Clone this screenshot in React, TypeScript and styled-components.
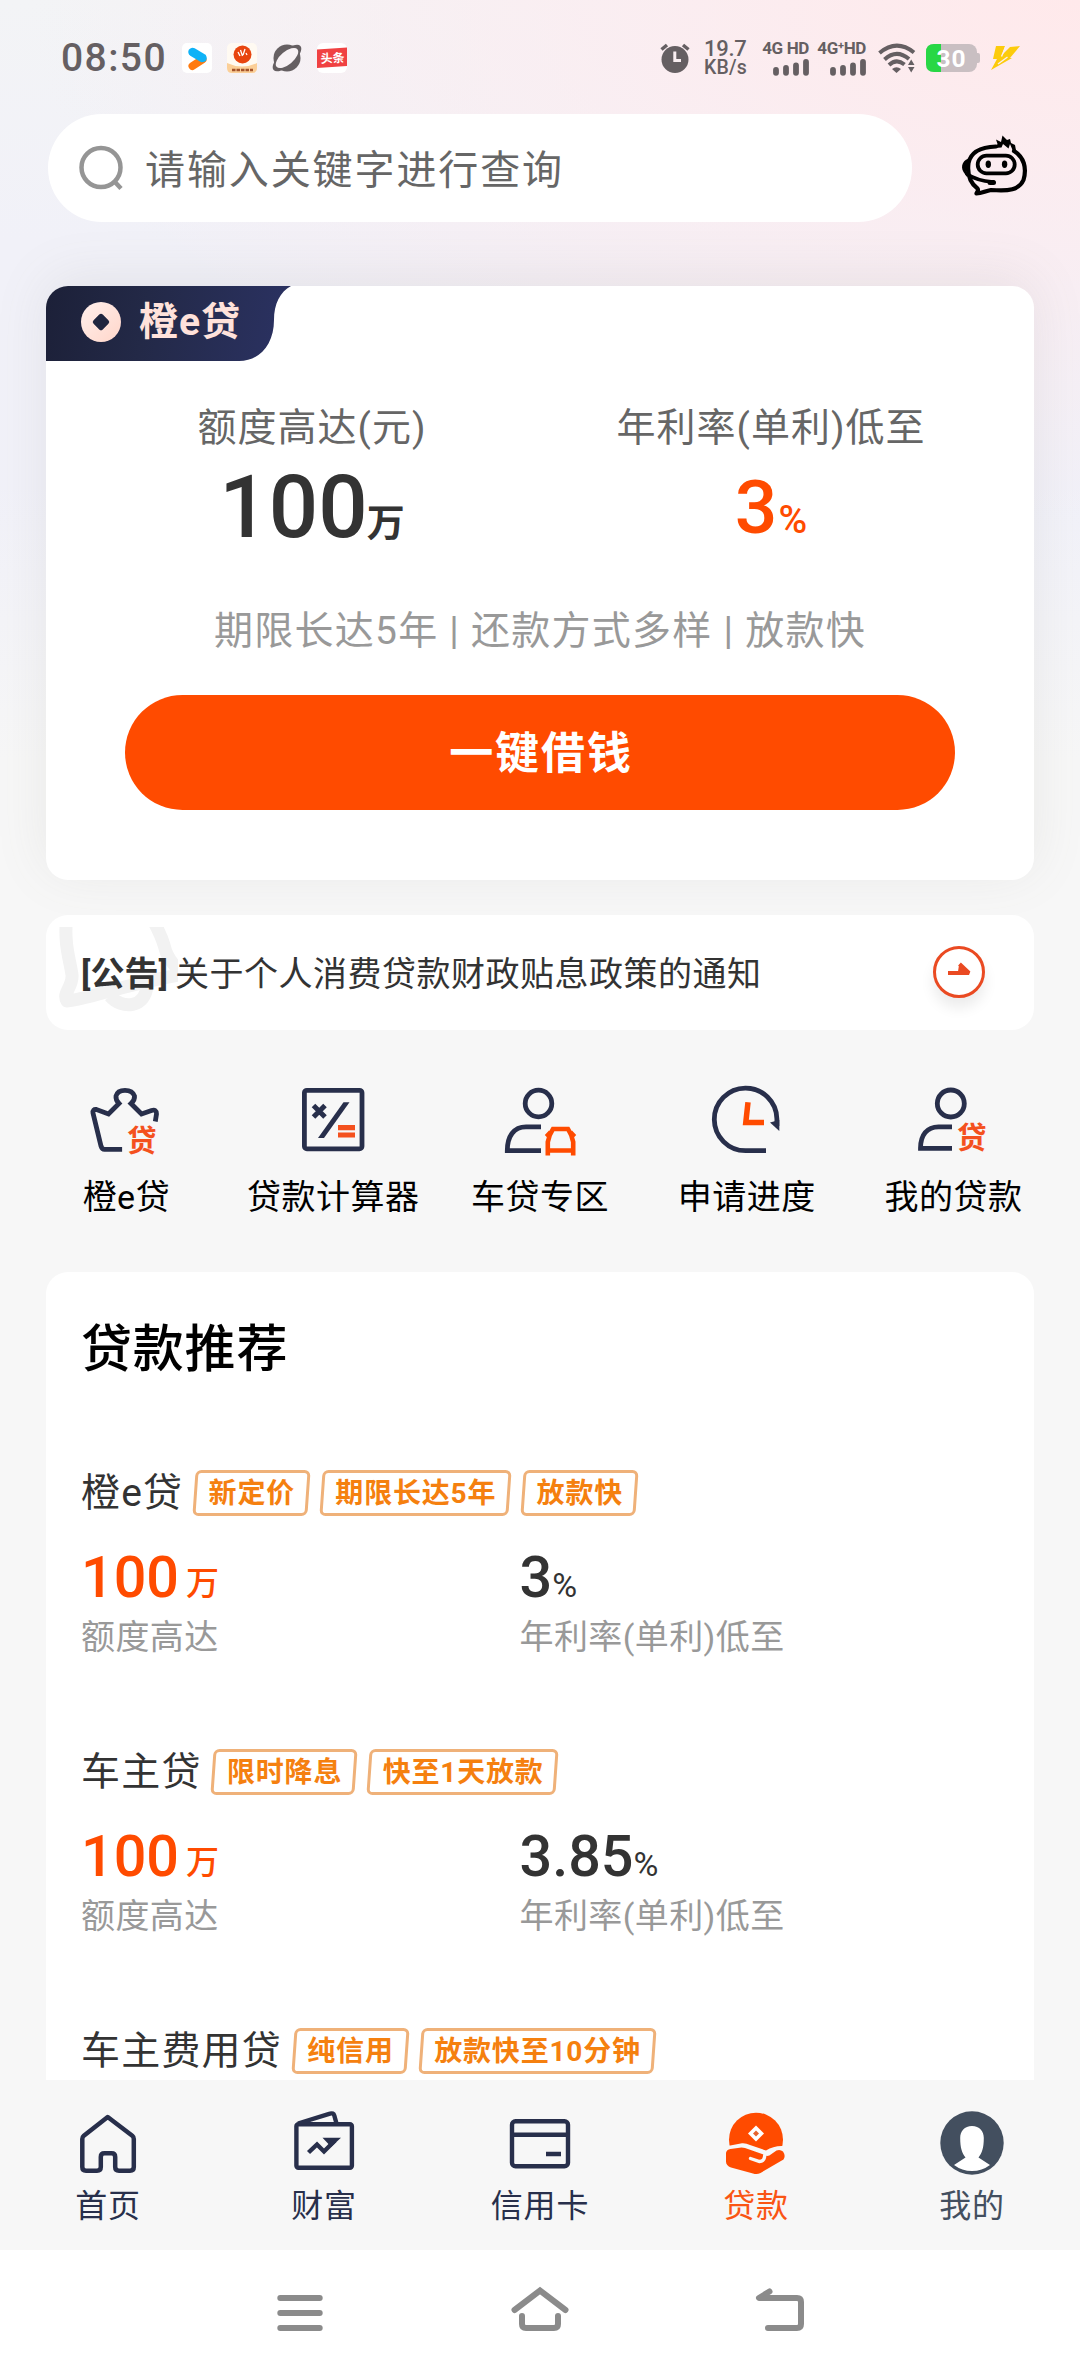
import React from "react";
import styled, { createGlobalStyle } from "styled-components";

const ORANGE = "#ff4b00";
const NAVY = "#282f4b";
const GREY = "#f7f7f7";
const STATUS = "#655f62";
const FONT = `Roboto, "Noto Sans CJK SC", sans-serif`;

const Global = createGlobalStyle`
  * { box-sizing: border-box; }
  body { margin: 0; background: ${GREY}; font-family: ${FONT}; }
`;

const Screen = styled.div`
  width: 1080px;
  height: 2376px;
  display: flex;
  flex-direction: column;
  overflow: hidden;
  white-space: nowrap;
  background:
    linear-gradient(180deg, rgba(247, 247, 247, 0) 480px, ${GREY} 760px),
    radial-gradient(ellipse 1050px 520px at 1080px 0, #ffe9eb 0%, rgba(252, 236, 240, 0.78) 45%, rgba(243, 241, 247, 0) 100%),
    linear-gradient(180deg, #f3f4f6 0, #f1f1f8 240px, #f1f1f9 600px);
`;

const Picture = styled.svg<{ $w: number; $h: number }>`
  display: block;
  flex: none;
  width: ${(p) => p.$w}px;
  height: ${(p) => p.$h}px;
  overflow: visible;
  font-family: ${FONT};
`;

/* ---------- status bar ---------- */

const StatusBar = styled.header`
  height: 114px;
  padding: 2px 60px 0 61px;
  display: flex;
  align-items: center;
  justify-content: space-between;
  color: ${STATUS};
`;

const StatusGroup = styled.div<{ $gap: number }>`
  display: flex;
  align-items: center;
  gap: ${(p) => p.$gap}px;
`;

const Clock = styled.span`
  font-size: 39px;
  font-weight: 500;
  letter-spacing: 1.4px;
  line-height: 44px;
  width: 106px;
`;

const Speed = styled.div`
  width: 45px;
  display: flex;
  flex-direction: column;
  font-weight: 500;
  margin: 0 3px 0 4px;
`;

const SpeedLine = styled.span<{ $size: number; $spacing: number }>`
  font-size: ${(p) => p.$size}px;
  letter-spacing: ${(p) => p.$spacing}px;
  line-height: 19px;
`;

const Signal = styled.div`
  width: 47px;
  display: flex;
  flex-direction: column;
  align-items: flex-end;
  gap: 3px;
`;

const SignalLabel = styled.span`
  font-size: 17px;
  line-height: 15px;
  font-weight: 700;
  letter-spacing: -0.35px;
`;

const Plus = styled.sup`
  font-size: 11px;
  line-height: 0;
  vertical-align: 5px;
`;

const WifiSlot = styled.div`
  margin-left: 2px;
`;

/* ---------- search ---------- */

const SearchRow = styled.div`
  height: 108px;
  padding: 0 52px 0 48px;
  display: flex;
  align-items: center;
  justify-content: space-between;
`;

const SearchField = styled.div`
  width: 864px;
  height: 108px;
  border-radius: 54px;
  background: #fff;
  display: flex;
  align-items: center;
  gap: 21px;
  padding-left: 31px;
`;

const Placeholder = styled.span`
  font-size: 40px;
  letter-spacing: 1.9px;
  line-height: 60px;
  padding-top: 5px;
  color: #666;
`;

const Assistant = styled.div`
  padding-bottom: 4px;
`;

/* ---------- hero card ---------- */

const Hero = styled.section`
  margin: 64px 46px 0;
  height: 594px;
  flex: none;
  border-radius: 22px;
  background: #fff;
  box-shadow: 0 -8px 54px rgba(120, 120, 110, 0.11);
  overflow: hidden;
  display: flex;
  flex-direction: column;
`;

const HeroTag = styled.div`
  width: 246px;
  height: 75px;
  padding: 0 0 3px 35px;
  display: flex;
  align-items: center;
  gap: 18px;
  background: linear-gradient(100deg, #1c2038 0%, #232947 40%, #2b3263 100%);
  clip-path: path("M0 0H245C234 6 228 18 228 34C228 58 214 75 193 75H0Z");
`;

const HeroTagText = styled.span`
  font-size: 39px;
  font-weight: 700;
  letter-spacing: 1px;
  line-height: 50px;
  color: #ffe2db;
`;

const HeroFigures = styled.div`
  display: flex;
  justify-content: center;
  padding: 37px 0 0 3px;
`;

const Figure = styled.div<{ $width: number }>`
  width: ${(p) => p.$width}px;
  display: flex;
  flex-direction: column;
  align-items: center;
`;

const FigureLabel = styled.span`
  font-size: 39px;
  letter-spacing: 1px;
  line-height: 60px;
  color: #666;
`;

const Amount = styled.div<{ $size: number; $color: string }>`
  font-size: ${(p) => p.$size}px;
  font-weight: 500;
  line-height: 98px;
  color: ${(p) => p.$color};
`;

const Unit = styled.span<{ $size: number; $gap: number; $weight?: number; $raise?: number }>`
  font-size: ${(p) => p.$size}px;
  font-weight: ${(p) => p.$weight ?? 500};
  margin-left: ${(p) => p.$gap}px;
  line-height: 1;
  vertical-align: ${(p) => p.$raise ?? 0}px;
`;

const HeroNote = styled.p`
  margin: 45px 0 0;
  text-align: center;
  font-size: 39px;
  letter-spacing: 1.25px;
  line-height: 60px;
  color: #999;
`;

const Borrow = styled.button`
  margin: 34px auto 0;
  width: 830px;
  height: 115px;
  padding: 0 0 6px 2px;
  border: 0;
  border-radius: 58px;
  background: ${ORANGE};
  color: #fff;
  font-family: inherit;
  font-size: 44px;
  font-weight: 700;
  letter-spacing: 1.9px;
`;

/* ---------- notice ---------- */

const Notice = styled.section`
  position: relative;
  margin: 35px 46px 0;
  height: 115px;
  flex: none;
  border-radius: 22px;
  background: #fff;
  display: flex;
  align-items: center;
  padding: 0 49px 0 35px;
  color: #333;
  font-size: 34px;
  line-height: 50px;
`;

const Watermark = styled.div`
  position: absolute;
  left: 12px;
  top: 12px;
`;

const NoticeTag = styled.b`
  position: relative;
  width: 94px;
  padding-top: 3px;
  font-weight: 700;
`;

const NoticeText = styled.span`
  position: relative;
  flex: 1;
  padding-top: 3px;
  letter-spacing: 0.5px;
`;

const Go = styled.div`
  width: 52px;
  height: 52px;
  margin-bottom: 2px;
  border-radius: 50%;
  border: 3px solid #ea4a22;
  background: #fff;
  box-shadow: 0 10px 14px rgba(0, 0, 0, 0.08);
  display: flex;
  align-items: center;
  justify-content: center;
`;

/* ---------- shortcuts ---------- */

const Shortcuts = styled.nav`
  display: grid;
  grid-template-columns: repeat(5, 206.8px);
  justify-content: center;
  height: 242px;
  flex: none;
  padding-top: 50px;
`;

const Shortcut = styled.div`
  display: flex;
  flex-direction: column;
  align-items: center;
  gap: 15.5px;
  font-size: 34px;
  letter-spacing: 0.5px;
  line-height: 50px;
  color: #000;
`;

/* ---------- recommendations ---------- */

const Recommend = styled.section`
  margin: 0 46px;
  height: 808px;
  flex: none;
  padding: 0 35px;
  border-radius: 22px 22px 0 0;
  background: #fff;
  overflow: hidden;
`;

const Title = styled.h2`
  margin: 43px 0 82px;
  font-size: 51px;
  font-weight: 500;
  line-height: 70px;
  letter-spacing: 0.8px;
  color: #000;
`;

const Product = styled.article`
  height: 279px;
`;

const ProductHead = styled.div`
  display: flex;
  align-items: center;
  height: 52px;
`;

const ProductName = styled.span`
  font-size: 39px;
  line-height: 52px;
  letter-spacing: 1.2px;
  color: #333;
  margin-right: 9.5px;
`;

const Tag = styled.span<{ $width: number }>`
  width: ${(p) => p.$width}px;
  height: 46px;
  margin-right: 10px;
  display: flex;
  align-items: center;
  justify-content: center;
  position: relative;
  font-size: 28px;
  font-weight: 700;
  letter-spacing: 0.8px;
  line-height: 40px;
  padding: 1px 0 0 1px;
  color: #f5800f;
  &::before {
    content: "";
    position: absolute;
    inset: 0 1px;
    border: 3px solid #efb179;
    border-radius: 6px;
    transform: skewX(-4deg);
  }
`;

const ProductFigures = styled.div`
  display: grid;
  grid-template-columns: 438.5px 1fr;
  margin-top: 25px;
`;

const ProductValue = styled.div<{ $color: string }>`
  font-size: 57.5px;
  font-weight: 500;
  height: 68px;
  line-height: 67px;
  color: ${(p) => p.$color};
`;

const ProductLabel = styled.div`
  font-size: 34px;
  line-height: 50px;
  letter-spacing: 0.4px;
  color: #999;
`;

/* ---------- bottom bars ---------- */

const TabBar = styled.nav`
  height: 170px;
  flex: none;
  background: ${GREY};
  display: grid;
  grid-template-columns: repeat(5, 1fr);
`;

const Tab = styled.div<{ $color: string }>`
  display: flex;
  flex-direction: column;
  align-items: center;
  padding-top: 30px;
  gap: 5px;
  font-size: 32px;
  line-height: 42px;
  letter-spacing: 0.8px;
  color: ${(p) => p.$color};
`;

const SystemBar = styled.footer`
  height: 126px;
  flex: none;
  background: #fff;
  display: grid;
  grid-template-columns: repeat(3, 240px);
  justify-content: center;
  justify-items: center;
  padding-top: 34px;
`;

/* ---------- drawings ---------- */

const PlayApp = () => (
  <Picture $w={30} $h={30} viewBox="0 0 30 30">
    <rect width="30" height="30" rx="5" fill="#fff" />
    <path d="M10.500 23L20.500 16.500" stroke="#ff7a0f" strokeWidth="8" strokeLinecap="round" />
    <path d="M10.500 9L20.500 15" stroke="#0fb2f7" strokeWidth="8.500" strokeLinecap="round" />
  </Picture>
);

const LanternApp = () => (
  <Picture $w={30} $h={30} viewBox="0 0 30 30">
    <rect width="30" height="30" rx="5" fill="#fffaf2" />
    <path d="M0 20Q15 27 30 20V25Q30 30 25 30H5Q0 30 0 25Z" fill="#fbcf98" />
    <circle cx="15.500" cy="11.500" r="9" fill="#e8450f" />
    <path d="M11 9l2 4M13.500 7l2 6M18 6l-2 6M19 10l1 2" stroke="#fff" strokeWidth="1.300" />
    <path d="M5 27H26" stroke="#a5532a" strokeWidth="2.500" strokeDasharray="3.500 1" />
  </Picture>
);

const PlanetApp = () => (
  <Picture $w={30} $h={30} viewBox="0 0 30 30">
    <circle cx="15" cy="15" r="13.500" fill={STATUS} />
    <ellipse cx="15" cy="15" rx="18" ry="7.500" transform="rotate(-42 15 15)" fill={STATUS} />
    <ellipse cx="15" cy="15" rx="13.600" ry="6.500" transform="rotate(-40 15 15)" fill="#f7f1f4" />
  </Picture>
);

const NewsApp = () => (
  <Picture $w={30} $h={30} viewBox="0 0 30 30">
    <rect width="30" height="30" rx="6" fill="#fff" />
    <path d="M0 6.500L30 4.500V23L0 25Z" fill="#f04142" />
    <text x="3.500" y="19.500" fontSize="12" fontWeight="700" fill="#fff" transform="rotate(-3 15 15)">
      头条
    </text>
  </Picture>
);

const Alarm = () => (
  <Picture $w={30} $h={30} viewBox="0 0 30 30">
    <circle cx="15" cy="16.500" r="13.500" fill={STATUS} />
    <path d="M1.500 6.500L7 2M28.500 6.500L23 2" stroke={STATUS} strokeWidth="3.500" />
    <path d="M14.800 8.500V17.500H21" stroke="#f9eef1" strokeWidth="3" fill="none" />
  </Picture>
);

const Bars = () => (
  <Picture $w={36} $h={17} viewBox="0 0 36 17">
    <path d="M3 11V13.800M13 9V13.800M23 6.500V13.800M33 3V13.800" stroke={STATUS} strokeWidth="5.800" strokeLinecap="round" />
  </Picture>
);

const Wifi = () => (
  <Picture $w={38} $h={30} viewBox="0 0 38 30">
    <g fill="none" stroke={STATUS} strokeWidth="4">
      <path d="M1.500 10Q18.500 -4.500 36 9.500" />
      <path d="M6.500 16.500Q18.500 5.500 31 16" />
      <path d="M11 22Q18.500 15 26.500 21.500" />
    </g>
    <path d="M14 26Q18.500 22.500 23 26L18.500 30Z" fill={STATUS} />
    <path d="M30 22L33.200 16.500L36.500 22ZM30 24L33.200 29.500L36.500 24Z" fill={STATUS} />
  </Picture>
);

const Battery = () => (
  <Picture $w={54} $h={28} viewBox="0 0 54 28">
    <rect width="51" height="28" rx="8" fill="#c9bfc2" />
    <path d="M50 9H52Q54 9 54 11V17Q54 19 52 19H50Z" fill="#c9bfc2" />
    <path d="M8 0H15V28H8Q0 28 0 20V8Q0 0 8 0Z" fill="#28d745" />
    <text x="25.500" y="22.500" fontSize="24.500" fontWeight="700" textAnchor="middle" letterSpacing="1" fill="#fff">
      30
    </text>
  </Picture>
);

const Bolt = () => (
  <Picture $w={30} $h={26} viewBox="0 0 30 26">
    <path d="M6 1H15L12 10L20 2L30 1L20 13H22L1 25L7 14H3Z" fill="#fccb0c" />
    <path d="M16 1L11.500 11.500M17.500 12L8 19" stroke="#fbeef0" strokeWidth="1.400" />
  </Picture>
);

const SearchIcon = () => (
  <Picture $w={45} $h={45} viewBox="0 0 45 45">
    <circle cx="22" cy="21.500" r="19.500" fill="none" stroke="#959595" strokeWidth="4.500" />
    <path d="M35 35L42 42.500" stroke="#959595" strokeWidth="4.500" />
  </Picture>
);

const Robot = () => (
  <Picture $w={66} $h={60} viewBox="962 136 66 60">
    <g fill="none" stroke="#000" strokeLinejoin="round" strokeLinecap="round">
      <path
        strokeWidth="4.200"
        d="M996 146.500C982 147 971 151 968.500 163C967 175 970 183 977.500 188.500C979 190.500 977 192 976.500 193.500C982 193.500 985 191 991 190C1009 191.500 1019 190 1023.500 180C1027 168 1024 157 1014 151"
      />
      <rect x="977.700" y="155.700" width="37" height="17.600" rx="8.800" strokeWidth="3.800" />
      <path d="M967 174C974 179 982 181 993 182" strokeWidth="3.600" />
      <path d="M990 182.500H993.500" strokeWidth="5" />
    </g>
    <ellipse cx="988.300" cy="164.300" rx="2.700" ry="3.700" />
    <ellipse cx="1004.600" cy="164.300" rx="2.700" ry="3.700" />
    <path d="M971 158C963 159 960 166 963.500 172L967 177Q966 166 971 158Z" />
    <path d="M995 148L997.500 144L996 139.500L1001 142L1002.500 135.500L1007 140L1010 139L1011 143L1015 145L1016.500 153L1012.500 150L1010 144L1008.500 148.500L1003 144L1001.500 147.500Z" />
  </Picture>
);

const Coin = () => (
  <Picture $w={40} $h={40} viewBox="0 0 40 40">
    <defs>
      <linearGradient id="coin" x1="0" y1="0" x2="1" y2="1">
        <stop offset="0" stopColor="#fff0ec" />
        <stop offset="1" stopColor="#ffd6ca" />
      </linearGradient>
    </defs>
    <circle cx="20" cy="20" r="20" fill="url(#coin)" />
    <rect x="13.500" y="13.500" width="13" height="13" rx="2.500" transform="rotate(45 20 20)" fill="#20263f" />
  </Picture>
);

const Bell = () => (
  <Picture $w={130} $h={90} viewBox="58 927 130 90">
    <defs>
      <clipPath id="bellTop">
        <rect x="50" y="927" width="128" height="90" />
      </clipPath>
    </defs>
    <g clipPath="url(#bellTop)" fill="none" stroke="#f2f2f2" strokeWidth="13" strokeLinejoin="round">
      <path d="M66.500 920C64 945 70 960 72 975C73 987 62 993 67 1001C90 999 120 985 184 974C172 965 166 955 164 945C161 935 158 930 153 920" />
      <path d="M110 996C122 1010 146 1008 147 985" />
    </g>
  </Picture>
);

const ArrowIcon = () => (
  <Picture $w={24} $h={20} viewBox="0 0 24 20">
    <path d="M1 11H22L12.500 2" fill="none" stroke="#ea4a22" strokeWidth="4" strokeLinejoin="bevel" />
    <path d="M11 9.500H22L12 3Z" fill="#ea4a22" />
  </Picture>
);

const Crown = () => (
  <Picture $w={72} $h={76} viewBox="90.500 1080 72 76">
    <path
      d="M155.800 1121.500L157 1114Q157.200 1109 152 1110.500L142 1114L131.500 1103.500Q135.500 1100 135 1096Q133 1090.300 125.500 1090.300Q118 1090.300 116.500 1096Q116 1100 119.500 1103.500L109 1114L97 1109.500Q93 1109 93.500 1113L101.500 1146Q102.500 1149.300 105 1149.300H122.600"
      fill="none"
      stroke={NAVY}
      strokeWidth="4.800"
    />
    <text x="127.500" y="1150.500" fontSize="29.500" fontWeight="700" fill="#f4511e">
      贷
    </text>
  </Picture>
);

const Calculator = () => (
  <Picture $w={72} $h={76} viewBox="298 1080 72 76">
    <rect x="305.400" y="1090.300" width="57.600" height="58.500" rx="2.500" fill="none" stroke={NAVY} strokeWidth="4.800" />
    <path d="M314.500 1105.500L326 1117M326 1105.500L314.500 1117" stroke={NAVY} strokeWidth="5" />
    <path d="M344.500 1102.300H350.500L325 1138H319Z" fill={NAVY} />
    <path d="M339 1127.700H356M339 1135H356" stroke="#f4511e" strokeWidth="5.200" />
  </Picture>
);

const CarOwner = () => (
  <Picture $w={72} $h={76} viewBox="504 1080 72 76">
    <circle cx="538.500" cy="1103.500" r="13.300" fill="none" stroke={NAVY} strokeWidth="4.800" />
    <path d="M541 1126.800H526C514 1126.800 507.300 1136 507.300 1150.700H541" fill="none" stroke={NAVY} strokeWidth="4.800" />
    <path
      d="M547.800 1155.500V1142Q549 1135 553 1129H568Q572 1135 573.200 1142V1155.500M547.800 1150.500H573.200"
      fill="none"
      stroke={ORANGE}
      strokeWidth="4.600"
    />
    <path d="M544.800 1135L549 1130.500L552.500 1133L549 1139.500ZM576.200 1135L572 1130.500L568.500 1133L572 1139.500Z" fill={ORANGE} />
  </Picture>
);

const Progress = () => (
  <Picture $w={72} $h={76} viewBox="711 1080 72 76">
    <path d="M766 1150.700H745.600A31.300 31.300 0 1 1 776.900 1119V1126" fill="none" stroke={NAVY} strokeWidth="4.800" />
    <path d="M779.300 1131V1120L770 1122.500Z" fill={NAVY} />
    <path d="M748 1102.300L745.800 1122.500H764" fill="none" stroke={ORANGE} strokeWidth="5.500" />
  </Picture>
);

const MyLoan = () => (
  <Picture $w={72} $h={76} viewBox="918 1080 72 76">
    <circle cx="950.800" cy="1103.500" r="13.500" fill="none" stroke={NAVY} strokeWidth="4.800" />
    <path d="M952 1126.800H938.500C927 1126.800 920.500 1135 920.500 1148.300H952" fill="none" stroke={NAVY} strokeWidth="4.800" />
    <text x="957" y="1148.300" fontSize="29.500" fontWeight="700" fill="#f4511e">
      贷
    </text>
  </Picture>
);

const HomeIcon = () => (
  <Picture $w={70} $h={70} viewBox="73 2110 70 70">
    <path
      d="M107.700 2117L132.300 2135.800Q133.800 2137 133.800 2139V2167Q133.800 2170.700 130 2170.700H119Q115.200 2170.700 115.200 2167V2157Q115.200 2153.300 111.500 2153.300H104.500Q100.800 2153.300 100.800 2157V2167Q100.800 2170.700 97 2170.700H86Q82.300 2170.700 82.300 2167V2139Q82.300 2137 83.800 2135.800Z"
      fill="none"
      stroke={NAVY}
      strokeWidth="4.500"
      strokeLinejoin="round"
    />
  </Picture>
);

const WealthIcon = () => (
  <Picture $w={70} $h={70} viewBox="289 2110 70 70">
    <g fill="none" stroke={NAVY} strokeWidth="4.400" strokeLinejoin="round">
      <rect x="296.400" y="2124.300" width="55.500" height="43.500" rx="2" />
      <path d="M298 2123.500L330 2113.700Q333.500 2112.500 334.300 2115.500L336.500 2123.500" />
      <path d="M308.500 2152.500L317 2144.500L324 2151.500L335 2140.500" strokeLinejoin="miter" />
    </g>
    <path d="M322.500 2137.800H341L331 2147L327.500 2143Z" fill={NAVY} />
  </Picture>
);

const CardIcon = () => (
  <Picture $w={70} $h={70} viewBox="505 2110 70 70">
    <rect x="512" y="2121.200" width="56" height="45" rx="3.500" fill="none" stroke={NAVY} strokeWidth="4.400" />
    <path d="M512 2134.700H568M546 2154H561" stroke={NAVY} strokeWidth="4.400" />
  </Picture>
);

const LoanIcon = () => (
  <Picture $w={70} $h={70} viewBox="721 2110 70 70">
    <circle cx="756" cy="2139.700" r="27" fill={ORANGE} />
    <path d="M756 2125.500L764 2133.500L756 2141.500L748 2133.500Z" fill="#fff" />
    <path d="M756 2130.500L759 2133.500L756 2136.500L753 2133.500Z" fill="#e5632f" />
    <path
      d="M724 2147L729 2145.800L742 2143.300Q746 2143 750 2145L766 2150.500Q774 2145.300 784 2146V2174H724Z"
      fill={GREY}
    />
    <path
      d="M726 2153Q726.500 2149.500 730.500 2149L741.500 2147.500L745 2148L763.500 2154.500Q767.500 2157.500 771.500 2154L776.500 2150.500Q780 2149 783 2151.500Q786 2156 783.500 2159.500L760.500 2173Q757 2174.800 753 2173.500L731 2167.500Q726 2165.500 726 2161.500Z"
      fill={ORANGE}
    />
    <path d="M750.500 2158.500L759.500 2161.500Q764.500 2161.500 764.800 2155" fill="none" stroke={GREY} strokeWidth="3.400" strokeLinecap="round" />
  </Picture>
);

const MeIcon = () => (
  <Picture $w={70} $h={70} viewBox="937 2110 70 70">
    <circle cx="972" cy="2143" r="31.700" fill="#434f5f" />
    <path
      d="M972 2126C979.500 2126 983.800 2131 983.800 2138C983.800 2148 982 2153 978.500 2157.500L990 2165Q982 2171 972 2171Q962 2171 954 2165L965.500 2157.500C962 2153 960.200 2148 960.200 2138C960.200 2131 964.500 2126 972 2126Z"
      fill="#fff"
    />
  </Picture>
);

const MenuKey = () => (
  <Picture $w={60} $h={50} viewBox="270 2284 60 50">
    <path d="M280.300 2298H319.700M280.300 2313H319.700M280.300 2328H319.700" stroke="#8b8b8b" strokeWidth="6" strokeLinecap="round" />
  </Picture>
);

const HomeKey = () => (
  <Picture $w={60} $h={50} viewBox="510 2284 60 50">
    <path
      d="M514.500 2310L540 2290.500L565.500 2310M522 2316V2324Q522 2328 526 2328H554Q558 2328 558 2324V2316"
      fill="none"
      stroke="#8b8b8b"
      strokeWidth="6"
      strokeLinecap="round"
    />
  </Picture>
);

const BackKey = () => (
  <Picture $w={60} $h={50} viewBox="750 2284 60 50">
    <path
      d="M769.500 2291.500L759 2298H797Q801 2298 801 2302V2324Q801 2328 797 2328H768"
      fill="none"
      stroke="#8b8b8b"
      strokeWidth="6"
      strokeLinecap="round"
      strokeLinejoin="round"
    />
  </Picture>
);

/* ---------- data ---------- */

const shortcuts = [
  { name: "橙e贷", Icon: Crown },
  { name: "贷款计算器", Icon: Calculator },
  { name: "车贷专区", Icon: CarOwner },
  { name: "申请进度", Icon: Progress },
  { name: "我的贷款", Icon: MyLoan },
];

const products = [
  {
    name: "橙e贷",
    rate: "3",
    tags: [
      { text: "新定价", width: 117 },
      { text: "期限长达5年", width: 191 },
      { text: "放款快", width: 117 },
    ],
  },
  {
    name: "车主贷",
    rate: "3.85",
    tags: [
      { text: "限时降息", width: 146 },
      { text: "快至1天放款", width: 191 },
    ],
  },
  {
    name: "车主费用贷",
    rate: "",
    tags: [
      { text: "纯信用", width: 117 },
      { text: "放款快至10分钟", width: 237 },
    ],
  },
];

const tabs = [
  { name: "首页", Icon: HomeIcon, color: NAVY },
  { name: "财富", Icon: WealthIcon, color: NAVY },
  { name: "信用卡", Icon: CardIcon, color: NAVY },
  { name: "贷款", Icon: LoanIcon, color: "#fa5514" },
  { name: "我的", Icon: MeIcon, color: "#434f5f" },
];

export default function App() {
  return (
    <>
      <Global />
      <Screen>
        <StatusBar>
          <StatusGroup $gap={15}>
            <Clock>08:50</Clock>
            <PlayApp />
            <LanternApp />
            <PlanetApp />
            <NewsApp />
          </StatusGroup>
          <StatusGroup $gap={10}>
            <Alarm />
            <Speed>
              <SpeedLine $size={22} $spacing={-0.3}>19.7</SpeedLine>
              <SpeedLine $size={19.5} $spacing={0.2}>KB/s</SpeedLine>
            </Speed>
            <Signal>
              <SignalLabel>4G HD</SignalLabel>
              <Bars />
            </Signal>
            <Signal>
              <SignalLabel>4G<Plus>+</Plus>HD</SignalLabel>
              <Bars />
            </Signal>
            <WifiSlot>
              <Wifi />
            </WifiSlot>
            <Battery />
            <Bolt />
          </StatusGroup>
        </StatusBar>

        <SearchRow>
          <SearchField>
            <SearchIcon />
            <Placeholder>请输入关键字进行查询</Placeholder>
          </SearchField>
          <Assistant>
            <Robot />
          </Assistant>
        </SearchRow>

        <Hero>
          <HeroTag>
            <Coin />
            <HeroTagText>橙e贷</HeroTagText>
          </HeroTag>
          <HeroFigures>
            <Figure $width={459}>
              <FigureLabel>额度高达(元)</FigureLabel>
              <Amount $size={87} $color="#333">
                100<Unit $size={38} $gap={-1} $weight={700} $raise={1}>万</Unit>
              </Amount>
            </Figure>
            <Figure $width={459}>
              <FigureLabel>年利率(单利)低至</FigureLabel>
              <Amount $size={75} $color={ORANGE}>
                3<Unit $size={39} $gap={1}>%</Unit>
              </Amount>
            </Figure>
          </HeroFigures>
          <HeroNote>期限长达5年 | 还款方式多样 | 放款快</HeroNote>
          <Borrow>一键借钱</Borrow>
        </Hero>

        <Notice>
          <Watermark>
            <Bell />
          </Watermark>
          <NoticeTag>[公告]</NoticeTag>
          <NoticeText>关于个人消费贷款财政贴息政策的通知</NoticeText>
          <Go>
            <ArrowIcon />
          </Go>
        </Notice>

        <Shortcuts>
          {shortcuts.map(({ name, Icon }) => (
            <Shortcut key={name}>
              <Icon />
              {name}
            </Shortcut>
          ))}
        </Shortcuts>

        <Recommend>
          <Title>贷款推荐</Title>
          {products.map((product) => (
            <Product key={product.name}>
              <ProductHead>
                <ProductName>{product.name}</ProductName>
                {product.tags.map((tag) => (
                  <Tag key={tag.text} $width={tag.width}>{tag.text}</Tag>
                ))}
              </ProductHead>
              {product.rate && (
                <ProductFigures>
                  <div>
                    <ProductValue $color={ORANGE}>
                      100<Unit $size={33} $gap={7} $raise={2}>万</Unit>
                    </ProductValue>
                    <ProductLabel>额度高达</ProductLabel>
                  </div>
                  <div>
                    <ProductValue $color="#333">
                      {product.rate}<Unit $size={34} $gap={0} $weight={400}>%</Unit>
                    </ProductValue>
                    <ProductLabel>年利率(单利)低至</ProductLabel>
                  </div>
                </ProductFigures>
              )}
            </Product>
          ))}
        </Recommend>

        <TabBar>
          {tabs.map(({ name, Icon, color }) => (
            <Tab key={name} $color={color}>
              <Icon />
              {name}
            </Tab>
          ))}
        </TabBar>

        <SystemBar>
          <MenuKey />
          <HomeKey />
          <BackKey />
        </SystemBar>
      </Screen>
    </>
  );
}
